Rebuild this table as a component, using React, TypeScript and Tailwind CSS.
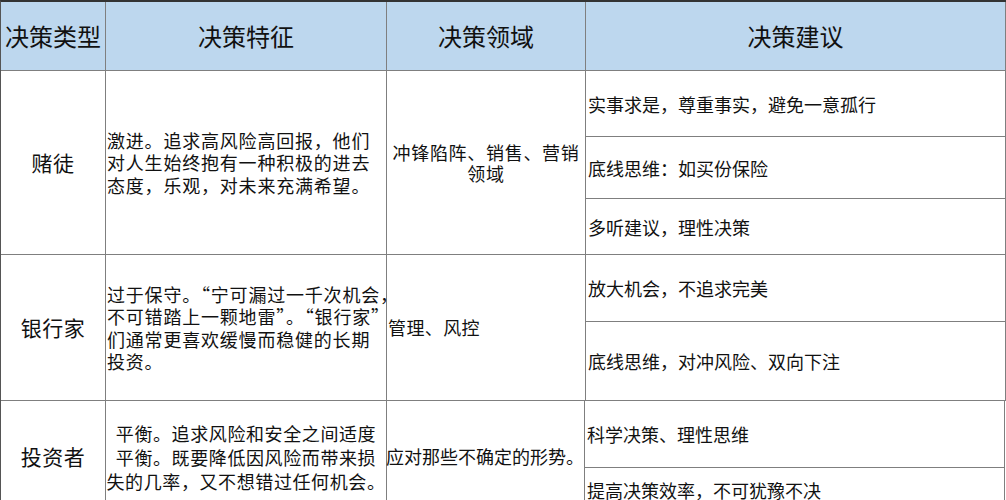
const font = "font-['Noto_Sans_CJK_SC','Noto_Sans',sans-serif]";

type Row = {
  type: string;
  height: number;
  feature: string[];
  featureClass: string;
  domain: string[];
  domainClass: string;
  advice: { text: string; h: number }[];
};

const rows: Row[] = [
  {
    type: "赌徒",
    height: 184,
    feature: ["激进。追求高风险高回报，他们", "对人生始终抱有一种积极的进去", "态度，乐观，对未来充满希望。"],
    featureClass: "items-start pl-[1px] tracking-[0.8px] leading-[22.5px]",
    domain: ["冲锋陷阵、销售、营销", "领域"],
    domainClass: "items-center text-center leading-[21px] tracking-[0.7px]",
    advice: [
      { text: "实事求是，尊重事实，避免一意孤行", h: 66 },
      { text: "底线思维：如买份保险", h: 62 },
      { text: "多听建议，理性决策", h: 56 },
    ],
  },
  {
    type: "银行家",
    height: 146,
    feature: ["过于保守。“宁可漏过一千次机会，", "不可错踏上一颗地雷”。“银行家”", "们通常更喜欢缓慢而稳健的长期", "投资。"],
    featureClass: "items-start pl-[1px] tracking-[0.8px] leading-[22.4px]",
    domain: ["管理、风控"],
    domainClass: "items-start pl-[1px] tracking-[0.4px]",
    advice: [
      { text: "放大机会，不追求完美", h: 67 },
      { text: "底线思维，对冲风险、双向下注", h: 79 },
    ],
  },
  {
    type: "投资者",
    height: 112,
    feature: ["平衡。追求风险和安全之间适度", "平衡。既要降低因风险而带来损", "失的几率，又不想错过任何机会。"],
    featureClass: "items-center text-center tracking-[0.6px] leading-[24px]",
    domain: ["应对那些不确定的形势。"],
    domainClass: "items-start -ml-[1px]",
    advice: [
      { text: "科学决策、理性思维", h: 67 },
      { text: "提高决策效率，不可犹豫不决", h: 45 },
    ],
  },
];

const headers = [
  { label: "决策类型", w: "w-[105px]" },
  { label: "决策特征", w: "w-[281px]" },
  { label: "决策领域", w: "w-[199px]" },
  { label: "决策建议", w: "w-[420px]" },
];

export default function App() {
  return (
    <div className={`w-[1006px] h-[500px] overflow-hidden bg-white text-[#111] ${font}`}>
      <div className="border-t-2 border-l border-t-[#333] border-l-[#555]">
        {/* header */}
        <div className="flex h-[69px] bg-[#bdd7ee]">
          {headers.map((h) => (
            <div
              key={h.label}
              className={`${h.w} flex shrink-0 items-center justify-center border-r border-b border-[#7f7f7f] pb-[1px] text-[24px] leading-none`}
            >
              {h.label}
            </div>
          ))}
        </div>

        {rows.map((r) => (
          <div key={r.type} className="flex" style={{ height: r.height }}>
            <div className="flex w-[105px] shrink-0 items-center justify-center border-r border-b border-[#7f7f7f] text-[21px] tracking-[0.5px]">
              {r.type}
            </div>
            <div
              className={`flex w-[281px] shrink-0 flex-col justify-center border-r border-b border-[#7f7f7f] text-[18px] ${r.featureClass}`}
            >
              {r.feature.map((l) => (
                <span key={l} className="block whitespace-nowrap">
                  {l}
                </span>
              ))}
            </div>
            <div
              className={`flex w-[199px] shrink-0 flex-col justify-center border-r border-b border-[#7f7f7f] text-[18px] ${r.domainClass}`}
            >
              {r.domain.map((l) => (
                <span key={l} className="block whitespace-nowrap">
                  {l}
                </span>
              ))}
            </div>
            <div className="flex w-[420px] shrink-0 flex-col">
              {r.advice.map((a) => (
                <div
                  key={a.text}
                  className="flex shrink-0 items-center border-r border-b border-[#7f7f7f] pl-[2px] text-[18px] leading-none"
                  style={{ height: a.h }}
                >
                  {a.text}
                </div>
              ))}
            </div>
          </div>
        ))}
      </div>
    </div>
  );
}
